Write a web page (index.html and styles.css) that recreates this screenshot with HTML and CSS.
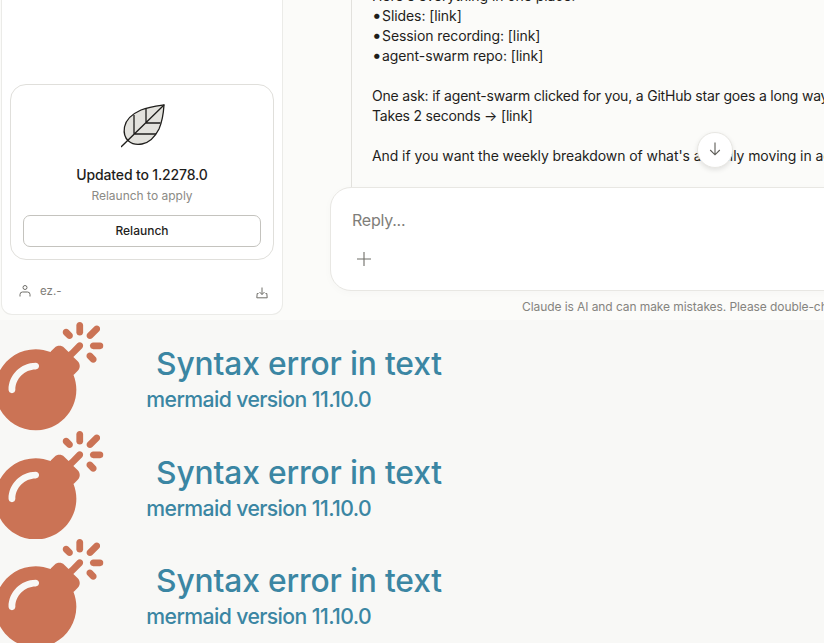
FILE: index.html
```html
<!DOCTYPE html>
<html lang="en">
<head>
<meta charset="utf-8">
<title>Claude</title>
<link rel="stylesheet" href="styles.css">
</head>
<body>
<svg class="defs" width="0" height="0" aria-hidden="true">
  <symbol id="bomb" viewBox="0 0 512 512">
    <path d="m411.313,123.313c6.25-6.25 6.25-16.375 0-22.625s-16.375-6.25-22.625,0l-32,32-9.375,9.375-20.688-20.688c-12.484-12.5-32.766-12.5-45.25,0l-16,16c-1.261,1.261-2.304,2.648-3.31,4.051-21.739-8.561-45.324-13.426-70.065-13.426-105.867,0-192,86.133-192,192s86.133,192 192,192 192-86.133 192-192c0-24.741-4.864-48.327-13.426-70.065 1.402-1.007 2.79-2.049 4.051-3.31l16-16c12.5-12.492 12.5-32.758 0-45.25l-20.688-20.688 9.375-9.375 32.001-31.999zm-219.313,100.687c-52.938,0-96,43.063-96,96 0,8.836-7.164,16-16,16s-16-7.164-16-16c0-70.578 57.422-128 128-128 8.836,0 16,7.164 16,16s-7.164,16-16,16z"/>
    <path d="m459.02,148.98c-6.25-6.25-16.375-6.25-22.625,0s-6.25,16.375 0,22.625l16,16c3.125,3.125 7.219,4.688 11.313,4.688 4.094,0 8.188-1.563 11.313-4.688 6.25-6.25 6.25-16.375 0-22.625l-16.001-16z"/>
    <path d="m340.395,75.605c3.125,3.125 7.219,4.688 11.313,4.688 4.094,0 8.188-1.563 11.313-4.688 6.25-6.25 6.25-16.375 0-22.625l-16-16c-6.25-6.25-16.375-6.25-22.625,0s-6.25,16.375 0,22.625l15.999,16z"/>
    <path d="m400,64c8.844,0 16-7.164 16-16v-32c0-8.836-7.156-16-16-16-8.844,0-16,7.164-16,16v32c0,8.836 7.156,16 16,16z"/>
    <path d="m496,96.586h-32c-8.844,0-16,7.164-16,16 0,8.836 7.156,16 16,16h32c8.844,0 16-7.164 16-16 0-8.836-7.156-16-16-16z"/>
    <path d="m436.98,75.605c3.125,3.125 7.219,4.688 11.313,4.688 4.094,0 8.188-1.563 11.313-4.688l32-32c6.25-6.25 6.25-16.375 0-22.625s-16.375-6.25-22.625,0l-32,32c-6.251,6.25-6.251,16.375-0.001,22.625z"/>
  </symbol>
</svg>

<section class="app">
  <aside class="sidebar">
    <div class="update-card">
      <svg class="leaf" viewBox="0 0 44 44" width="44" height="44" aria-hidden="true">
        <path class="leaf-body" d="M43 1C36 2 28 3 20 6C11 10 5 15 3.500 23C2.500 29 4 34 7.500 37C11 40 16 41 21 40C29 38.500 34.500 32 38 25C41 18 42.500 9 43 1Z"/>
        <path class="leaf-vein" d="M43 1L0 43M13 11V30M25 4V19M25 19H39.500M13 30H35"/>
      </svg>
      <div class="update-title">Updated to 1.2278.0</div>
      <div class="update-sub">Relaunch to apply</div>
      <button class="relaunch" type="button">Relaunch</button>
    </div>
    <div class="account">
      <svg class="icon" viewBox="0 0 12 12" width="12" height="12" aria-hidden="true">
        <circle cx="6" cy="2.500" r="2"/>
        <path d="M1 11.500V9.500A2.500 2.500 0 0 1 3.500 7H8.500A2.500 2.500 0 0 1 11 9.500V11.500"/>
      </svg>
      <span class="account-name">ez.-</span>
      <svg class="icon download" viewBox="0 0 12 12" width="12" height="12" aria-hidden="true">
        <path d="M6 .5V7.500M3.500 5L6 7.500L8.500 5M2.500 6.500H1.200L.8 10.800H11.200L10.800 6.500H9.500"/>
      </svg>
    </div>
  </aside>

  <main class="chat">
    <div class="messages">
      <div class="message">
        <p>Here's everything in one place:</p>
        <p><span class="bullet">•</span>Slides: [link]</p>
        <p><span class="bullet">•</span>Session recording: [link]</p>
        <p><span class="bullet">•</span>agent-swarm repo: [link]</p>
        <p class="blank">&nbsp;</p>
        <p class="tight">One ask: if agent-swarm clicked for you, a GitHub star goes a long way.</p>
        <p class="tight">Takes 2 seconds → [link]</p>
        <p class="blank">&nbsp;</p>
        <p>And if you want the weekly breakdown of what's actually moving in agent-land, subscribe.</p>
      </div>
      <button class="scroll-down" type="button" aria-label="Scroll to bottom">
        <svg viewBox="0 0 16 16" width="16" height="16" aria-hidden="true"><path d="M8 1.500V13.800M3.200 9L8 13.800L12.800 9"/></svg>
      </button>
    </div>
    <div class="composer">
      <div class="placeholder">Reply...</div>
      <svg class="plus" viewBox="0 0 16 16" width="16" height="16" aria-hidden="true"><path d="M8 1V15M1 8H15"/></svg>
    </div>
    <div class="disclaimer">Claude is AI and can make mistakes. Please double-check responses.</div>
  </main>
</section>

<section class="errors">
  <svg class="error" viewBox="0 0 2412 512" aria-roledescription="error">
    <use href="#bomb" width="512" height="512"/>
    <text class="error-title" x="1435" y="250">Syntax error in text</text>
    <text class="error-version" x="1245" y="400">mermaid version 11.10.0</text>
  </svg>
  <svg class="error" viewBox="0 0 2412 512" aria-roledescription="error">
    <use href="#bomb" width="512" height="512"/>
    <text class="error-title" x="1435" y="250">Syntax error in text</text>
    <text class="error-version" x="1245" y="400">mermaid version 11.10.0</text>
  </svg>
  <svg class="error" viewBox="0 0 2412 512" aria-roledescription="error">
    <use href="#bomb" width="512" height="512"/>
    <text class="error-title" x="1435" y="250">Syntax error in text</text>
    <text class="error-version" x="1245" y="400">mermaid version 11.10.0</text>
  </svg>
</section>
</body>
</html>
```

FILE: styles.css
```css
* { box-sizing: border-box; }
html, body { margin: 0; height: 643px; overflow: hidden; }
body {
  background: #f8f8f6;
  font-family: Inter, "Liberation Sans", sans-serif;
  color: #1f1e1c;
}
p { margin: 0; }
button { font: inherit; cursor: pointer; }
.defs { display: block; height: 0; }

.app {
  display: flex;
  height: 320px;
  background: #fbfbf9;
  overflow: hidden;
}

.sidebar {
  flex: none;
  width: 282px;
  height: 315px;
  margin-left: 1px;
  background: #fff;
  border: 1px solid #ebebe8;
  border-top: 0;
  border-radius: 0 0 11px 11px;
  padding: 0 8px;
  display: flex;
  flex-direction: column;
  justify-content: flex-end;
}

.update-card {
  height: 176px;
  border: 1px solid #e0dfdb;
  border-radius: 16px;
  padding: 19px 12px 0;
  display: flex;
  flex-direction: column;
  align-items: center;
}
.leaf { display: block; margin-left: 1px; flex: none; }
.leaf-body { fill: #e3e2dd; stroke: #1f1e1c; stroke-width: 1.300; }
.leaf-vein { fill: none; stroke: #1f1e1c; stroke-width: 1.300; }
.update-title {
  margin-top: 17px;
  font-size: 14px;
  line-height: 20px;
  font-weight: 450;
  letter-spacing: -.15px;
  color: #1f1e1c;
}
.update-sub {
  margin-top: 2px;
  font-size: 12px;
  line-height: 18px;
  color: #8b8a85;
}
.relaunch {
  margin-top: 10px;
  width: 100%;
  height: 32px;
  flex: none;
  padding: 0 0 2px;
  background: #fff;
  border: 1px solid #c4c3be;
  border-radius: 7px;
  font-size: 12px;
  font-weight: 450;
  color: #1f1e1c;
}

.account {
  display: flex;
  align-items: center;
  height: 54px;
  padding: 8px 6px 0 9px;
  color: #7a7974;
}
.icon { fill: none; stroke: #6f6e69; stroke-width: 1; flex: none; }
.account-name { margin-left: 9px; font-size: 11.500px; color: #7f7e79; }
.download { margin-left: auto; margin-top: 4px; }

.chat {
  flex: 1;
  min-width: 0;
  margin-left: 47px;
  display: flex;
  flex-direction: column;
}

.messages {
  position: relative;
  height: 187px;
  flex: none;
  overflow: hidden;
  display: flex;
  flex-direction: column;
  justify-content: flex-end;
  padding-bottom: 21px;
  margin-left: 21px;
  border-left: 1px solid #e2e1dd;
}
.message {
  flex: none;
  width: max-content;
  padding-left: 20px;
  font-size: 14px;
  line-height: 20px;
  letter-spacing: -.08px;
  color: #1f1e1c;
}
.tight { letter-spacing: -.2px; }
.bullet {
  display: inline-block;
  width: 10px;
  font-size: 17px;
  line-height: 0;
}
.scroll-down {
  position: absolute;
  left: 345px;
  top: 132px;
  width: 36px;
  height: 36px;
  padding: 0;
  border-radius: 50%;
  background: #fff;
  border: 1px solid #e8e7e3;
  box-shadow: 0 2px 5px rgba(0, 0, 0, .1);
  display: flex;
  align-items: center;
  justify-content: center;
}
.scroll-down svg { fill: none; stroke: #5d5c57; stroke-width: 1.100; margin-top: -2px; }

.composer {
  flex: none;
  width: 600px;
  height: 104px;
  background: #fff;
  border: 1px solid #e8e7e3;
  border-radius: 21px;
  padding: 21px 21px 0;
  box-shadow: 0 2px 8px rgba(0, 0, 0, .025);
}
.placeholder {
  font-size: 16px;
  line-height: 22px;
  letter-spacing: -.25px;
  color: #7f7e79;
}
.plus {
  display: block;
  margin: 20px 0 0 4px;
  fill: none;
  stroke: #6f6e69;
  stroke-width: 1.100;
}

.disclaimer {
  margin: 8px 0 0 192px;
  font-size: 12px;
  line-height: 16px;
  letter-spacing: -.08px;
  color: #85847f;
  white-space: nowrap;
}

.errors {
  padding-top: 2px;
  margin-left: -5px;
}
.error {
  display: block;
  width: 511px;
  height: 108.500px;
  fill: #cb7355;
}
.error-title,
.error-version {
  fill: #3b86a3;
  text-anchor: middle;
  font-family: Inter, "Liberation Sans", sans-serif;
  font-weight: 500;
}
.error-title { font-size: 150px; letter-spacing: -.8px; }
.error-version { font-size: 100px; letter-spacing: -2.800px; }
```
